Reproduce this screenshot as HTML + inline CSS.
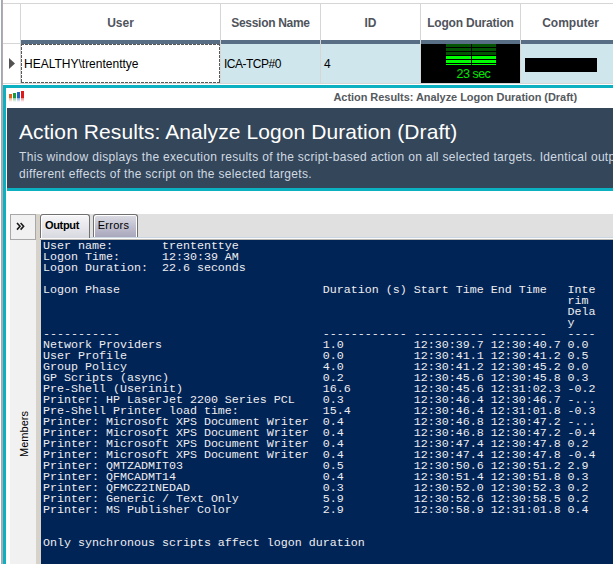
<!DOCTYPE html>
<html><head><meta charset="utf-8">
<style>
*{margin:0;padding:0;box-sizing:border-box}
html,body{width:613px;height:564px;overflow:hidden;background:#fff;position:relative;font-family:"Liberation Sans",sans-serif}
.a{position:absolute}
.hd{position:absolute;top:5px;height:36px;font-weight:bold;font-size:12px;color:#50545c;text-align:center;line-height:36px;white-space:nowrap}
.cell{position:absolute;top:45px;height:39px;font-size:12px;color:#000;line-height:39px;white-space:nowrap;padding-left:3px}
.con{position:absolute;left:41px;top:240px;width:572px;height:324px;background:#012456;color:#eeedf0;font-family:"Liberation Mono",monospace;font-size:11.67px;line-height:11px;white-space:pre}
</style></head><body>
<!-- left gray bar -->
<div class="a" style="left:1px;top:0;width:1px;height:564px;background:#a4a8b6"></div><div class="a" style="left:2px;top:0;width:1px;height:564px;background:#b2acac"></div>
<!-- header top line -->
<div class="a" style="left:3px;top:3px;width:610px;height:1px;background:#d6d6d6"></div>
<!-- row header column line -->
<div class="a" style="left:20px;top:3px;width:1px;height:81px;background:#d6d6d6"></div>
<div class="a" style="left:3px;top:43px;width:17px;height:1px;background:#d6d6d6"></div>
<!-- blue bar -->
<div class="a" style="left:21px;top:40px;width:592px;height:4px;background:#576e85"></div>
<!-- data row bg -->
<div class="a" style="left:221px;top:44px;width:392px;height:39px;background:#cee6ec"></div>
<!-- focus rect on user cell -->
<div class="a" style="left:21px;top:44px;width:199px;height:39px;background:#fff"></div>
<svg class="a" style="left:21px;top:44px" width="199" height="39" shape-rendering="crispEdges"><g stroke="#5a5a5a" stroke-width="1" stroke-dasharray="3 1" fill="none"><path d="M0 0.5H199"/><path d="M0 38.5H199"/><path d="M0.5 0V39" stroke-dashoffset="1"/><path d="M198.5 0V39" stroke-dashoffset="1"/></g></svg>
<!-- row bottom line -->
<div class="a" style="left:3px;top:83px;width:610px;height:1px;background:#d6d6d6"></div>
<!-- column dividers -->
<div class="a" style="left:220px;top:3px;width:1px;height:81px;background:#d6d6d6"></div>
<div class="a" style="left:320px;top:3px;width:1px;height:81px;background:#d6d6d6"></div>
<div class="a" style="left:420px;top:3px;width:1px;height:81px;background:#d6d6d6"></div>
<div class="a" style="left:520px;top:3px;width:1px;height:81px;background:#d6d6d6"></div>
<!-- headers -->
<div class="hd" style="left:21px;width:199px">User</div>
<div class="hd" style="left:221px;width:99px;letter-spacing:-0.3px">Session Name</div>
<div class="hd" style="left:321px;width:99px">ID</div>
<div class="hd" style="left:421px;width:99px;letter-spacing:-0.2px">Logon Duration</div>
<div class="hd" style="left:521px;width:99px">Computer</div>
<!-- row triangle -->
<svg class="a" style="left:9px;top:58px" width="8" height="13"><polygon points="0,0 6,5.5 0,11" fill="#525252"/></svg>
<!-- cells -->
<div class="cell" style="left:21px">HEALTHY\trententtye</div>
<div class="cell" style="left:221px;letter-spacing:-0.5px">ICA-TCP#0</div>
<div class="cell" style="left:321px">4</div>
<!-- logon duration meter -->
<div class="a" style="left:421px;top:44px;width:99px;height:39px;background:#000"></div>
<div class="a" style="left:446px;top:44px;width:25px;height:3px;background:#025402"></div>
<div class="a" style="left:472px;top:44px;width:24px;height:3px;background:#025402"></div>
<div class="a" style="left:446px;top:48px;width:25px;height:3px;background:#025402"></div>
<div class="a" style="left:472px;top:48px;width:24px;height:3px;background:#025402"></div>
<div class="a" style="left:446px;top:52px;width:25px;height:3px;background:#025402"></div>
<div class="a" style="left:472px;top:52px;width:24px;height:3px;background:#025402"></div>
<div class="a" style="left:446px;top:56px;width:25px;height:3px;background:#00ff00"></div>
<div class="a" style="left:472px;top:56px;width:24px;height:3px;background:#00ff00"></div>
<div class="a" style="left:446px;top:60px;width:25px;height:3px;background:#00ff00"></div>
<div class="a" style="left:472px;top:60px;width:24px;height:3px;background:#00ff00"></div>
<div class="a" style="left:446px;top:64px;width:25px;height:1px;background:#00ff00"></div>
<div class="a" style="left:472px;top:64px;width:24px;height:1px;background:#00ff00"></div>
<div class="a" style="left:456.5px;top:67px;height:14px;font-size:12.5px;line-height:14px;color:#00e800;letter-spacing:-0.5px;white-space:nowrap">23 sec</div>
<!-- computer redaction -->
<div class="a" style="left:525px;top:58px;width:72px;height:14px;background:#000"></div>
<!-- teal window border -->
<div class="a" style="left:3px;top:85px;width:610px;height:3px;background:#0bb0c1"></div>
<div class="a" style="left:3px;top:85px;width:3px;height:479px;background:#0bb0c1"></div>
<!-- title bar icon -->
<div class="a" style="left:9px;top:94px;width:3px;height:4px;background:#e0601a"></div>
<div class="a" style="left:13px;top:93px;width:3px;height:5px;background:#1a9a3a"></div>
<div class="a" style="left:17px;top:92px;width:3px;height:6px;background:#1a6ac0"></div>
<div class="a" style="left:21px;top:91px;width:3px;height:7px;background:#e01a1a"></div>
<div class="a" style="left:9px;top:98px;width:3px;height:4px;background:linear-gradient(rgba(224,96,26,0.55),rgba(224,96,26,0))"></div><div class="a" style="left:13px;top:98px;width:3px;height:4px;background:linear-gradient(rgba(26,154,58,0.55),rgba(26,154,58,0))"></div><div class="a" style="left:17px;top:98px;width:3px;height:4px;background:linear-gradient(rgba(26,106,192,0.55),rgba(26,106,192,0))"></div><div class="a" style="left:21px;top:98px;width:3px;height:4px;background:linear-gradient(rgba(224,26,26,0.55),rgba(224,26,26,0))"></div>
<div class="a" style="left:300px;top:88px;width:277px;height:19px;text-align:right;font-size:11px;line-height:19px;font-weight:bold;color:#555a60;white-space:nowrap;letter-spacing:-0.05px">Action Results: Analyze Logon Duration (Draft)</div>
<!-- dark panel -->
<div class="a" style="left:7px;top:108px;width:606px;height:80px;background:#344659;overflow:hidden">
  <div class="a" style="left:12px;top:12px;font-size:21px;line-height:24px;color:#fff;letter-spacing:0.09px;white-space:nowrap">Action Results: Analyze Logon Duration (Draft)</div>
  <div class="a" style="left:12px;top:41px;font-size:12px;line-height:17px;color:#d0dae3;white-space:nowrap;letter-spacing:0.32px">This window displays the execution results of the script-based action on all selected targets. Identical output<br>different effects of the script on the selected targets.</div>
</div>
<div class="a" style="left:7px;top:188px;width:606px;height:3px;background:#0bb0c1"></div>
<!-- » button -->
<div class="a" style="left:10px;top:214px;width:26px;height:26px;background:#f1f1f1;border:1px solid #a8a8a8"></div>
<svg class="a" style="left:16px;top:222px" width="10" height="9"><path d="M1 1 L4 4.3 L1 7.6 M4.6 1 L7.6 4.3 L4.6 7.6" fill="none" stroke="#1a1a1a" stroke-width="1.6"/></svg>
<!-- sidebar -->
<div class="a" style="left:10px;top:240px;width:26px;height:324px;background:#f1f1f1"></div>
<div class="a" style="left:23.5px;top:434px;transform:translate(-50%,-50%) rotate(-90deg);font-size:11px;line-height:11px;color:#000;white-space:nowrap">Members</div>
<!-- beige strip -->
<div class="a" style="left:36px;top:214px;width:4px;height:350px;background:#d7d3cb"></div>
<div class="a" style="left:40px;top:240px;width:1px;height:324px;background:#d7d3cb"></div>
<!-- tab strip -->
<div class="a" style="left:41px;top:214px;width:572px;height:23px;background:#e0e0e0"></div>
<div class="a" style="left:40px;top:237px;width:573px;height:1px;background:#cad6e2"></div>
<div class="a" style="left:40px;top:238px;width:573px;height:1px;background:#fafafa"></div>
<div class="a" style="left:40px;top:239px;width:573px;height:1px;background:#b8b6ae"></div>
<!-- tabs -->
<div class="a" style="left:40px;top:214px;width:50px;height:24px;background:linear-gradient(#f6f6f8,#d8d8e0);border:1px solid #707070;border-bottom:none;border-radius:3px 3px 0 0;box-shadow:inset 1px 1px 0 #fff"></div>
<div class="a" style="left:37px;top:213px;width:50px;height:24px;font-size:11px;font-weight:bold;line-height:24px;text-align:center;color:#000;letter-spacing:-0.3px">Output</div>
<div class="a" style="left:93px;top:214px;width:45px;height:23px;background:linear-gradient(#dcdce4,#a8a6bc);border:1px solid #707070;border-bottom:none;border-radius:3px 3px 0 0;box-shadow:inset 1px 1px 0 #fff,inset -1px 0 0 #fff"></div>
<div class="a" style="left:91px;top:213px;width:45px;height:23px;font-size:11px;line-height:24px;text-align:center;color:#000;letter-spacing:0.3px">Errors</div>
<!-- console -->
<div class="con"><div class="a" style="left:2px;top:1px">User name:       trententtye
Logon Time:      12:30:39 AM
Logon Duration:  22.6 seconds

Logon Phase                             Duration (s) Start Time End Time   Inte
                                                                           rim
                                                                           Dela
                                                                           y
-----------                             ------------ ---------- --------   ----
Network Providers                       1.0          12:30:39.7 12:30:40.7 0.0
User Profile                            0.0          12:30:41.1 12:30:41.2 0.5
Group Policy                            4.0          12:30:41.2 12:30:45.2 0.0
GP Scripts (async)                      0.2          12:30:45.6 12:30:45.8 0.3
Pre-Shell (Userinit)                    16.6         12:30:45.6 12:31:02.3 -0.2
Printer: HP LaserJet 2200 Series PCL    0.3          12:30:46.4 12:30:46.7 -...
Pre-Shell Printer load time:            15.4         12:30:46.4 12:31:01.8 -0.3
Printer: Microsoft XPS Document Writer  0.4          12:30:46.8 12:30:47.2 -...
Printer: Microsoft XPS Document Writer  0.4          12:30:46.8 12:30:47.2 -0.4
Printer: Microsoft XPS Document Writer  0.4          12:30:47.4 12:30:47.8 0.2
Printer: Microsoft XPS Document Writer  0.4          12:30:47.4 12:30:47.8 -0.4
Printer: QMTZADMIT03                    0.5          12:30:50.6 12:30:51.2 2.9
Printer: QFMCADMT14                     0.4          12:30:51.4 12:30:51.8 0.3
Printer: QFMCZ2INEDAD                   0.3          12:30:52.0 12:30:52.3 0.2
Printer: Generic / Text Only            5.9          12:30:52.6 12:30:58.5 0.2
Printer: MS Publisher Color             2.9          12:30:58.9 12:31:01.8 0.4


Only synchronous scripts affect logon duration</div></div>
</body></html>
